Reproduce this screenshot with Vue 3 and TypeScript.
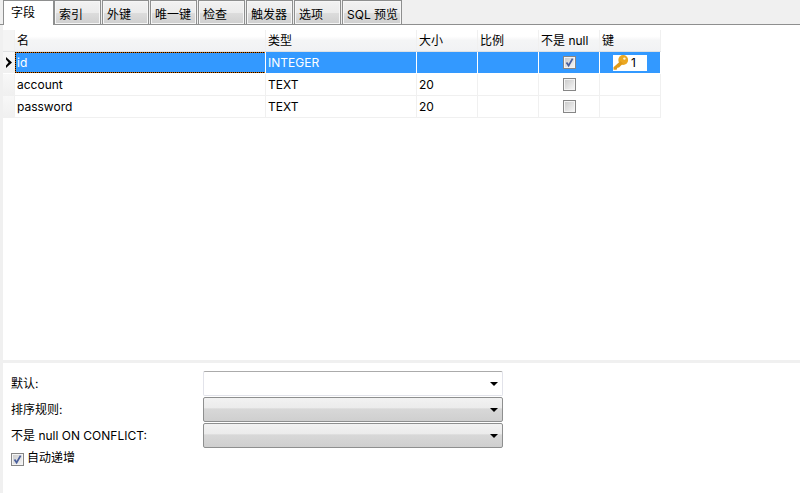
<script setup lang="ts">
interface Row { name: string; type: string; size: string; scale: string; notNull: boolean; key: boolean; selected: boolean }
const tabs: string[] = ['索引', '外键', '唯一键', '检查', '触发器', '选项', 'SQL 预览']
const headers: string[] = ['名', '类型', '大小', '比例', '不是 null', '键']
const rows: Row[] = [
  { name: 'id', type: 'INTEGER', size: '', scale: '', notNull: true, key: true, selected: true },
  { name: 'account', type: 'TEXT', size: '20', scale: '', notNull: false, key: false, selected: false },
  { name: 'password', type: 'TEXT', size: '20', scale: '', notNull: false, key: false, selected: false },
]
const fields: { label: string; plain: boolean }[] = [
  { label: '默认:', plain: true },
  { label: '排序规则:', plain: false },
  { label: '不是 null ON CONFLICT:', plain: false },
]
</script>

<template>
  <div class="app">
    <div class="tabbar">
      <div class="tab active">字段</div>
      <div v-for="t in tabs" :key="t" class="tab" :class="{ wide: t === 'SQL 预览' }">{{ t }}</div>
    </div>
    <div class="main">
      <div class="grid">
        <div class="row head">
          <div class="ind"></div>
          <div v-for="h in headers" :key="h" class="cell">{{ h }}</div>
        </div>
        <div v-for="r in rows" :key="r.name" class="row" :class="{ sel: r.selected }">
          <div class="ind">
            <svg v-if="r.selected" width="8" height="11" viewBox="0 0 8 11" class="arrow">
              <path d="M1 0 L7 5.5 L1 11 L1 8.5 L3.6 5.5 L1 2.5 Z" fill="#000" />
            </svg>
          </div>
          <div class="cell" :class="{ focus: r.selected }">{{ r.name }}</div>
          <div class="cell">{{ r.type }}</div>
          <div class="cell">{{ r.size }}</div>
          <div class="cell">{{ r.scale }}</div>
          <div class="cell center">
            <span class="check">
              <svg v-if="r.notNull" width="11" height="11" viewBox="0 0 11 11">
                <path d="M2.5 5.5 L4.6 8.6 L8.6 1.6" fill="none" stroke="#4a5f9c" stroke-width="1.8" />
              </svg>
            </span>
          </div>
          <div class="cell keycell">
            <span v-if="r.key" class="keybadge">
              <svg width="16" height="15" viewBox="0 0 16 15">
                <circle cx="10.2" cy="5" r="4.9" fill="#eba823" />
                <circle cx="11.4" cy="3.6" r="1.2" fill="#fff3cf" />
                <path d="M7.5 6 L0.5 12.2 L0.5 14.8 L3.6 14.8 L4.4 12.8 L6 12.4 L10 8.6 Z" fill="#e09a18" />
              </svg>
              <span>1</span>
            </span>
          </div>
        </div>
      </div>
    </div>
    <div class="form">
      <div v-for="f in fields" :key="f.label" class="field">
        <label class="label">{{ f.label }}</label>
        <div class="select" :class="{ plain: f.plain }"><span class="caret"></span></div>
      </div>
      <div class="auto">
        <span class="check small">
          <svg width="11" height="11" viewBox="0 0 11 11">
            <path d="M2.5 5.5 L4.6 8.6 L8.6 1.6" fill="none" stroke="#4a5f9c" stroke-width="1.8" />
          </svg>
        </span>
        <span>自动递增</span>
      </div>
    </div>
  </div>
</template>

<style>
html, body { margin: 0; background: #fff; }
</style>

<style scoped>
.app {
  width: 800px;
  height: 493px;
  background: #f0f0f0;
  display: flex;
  flex-direction: column;
  overflow: hidden;
  font-family: Inter, "Noto Sans CJK SC", sans-serif;
  font-size: 12px;
  color: #000;
}
.tabbar {
  height: 25px;
  box-sizing: border-box;
  display: flex;
  padding-left: 3px;
  gap: 1px;
  border-bottom: 1px solid #8e8f8f;
  flex: none;
}
.tab {
  width: 47px;
  height: 24px;
  box-sizing: border-box;
  border: 1px solid #8e8f8f;
  border-bottom: none;
  background: linear-gradient(#f2f2f2 0, #ebebeb 50%, #dddddd 51%, #cfcfcf 100%);
  box-shadow: inset 0 0 0 1px #f6f6f6;
  padding-left: 4px;
  padding-top: 4px;
  line-height: 20px;
  white-space: nowrap;
}
.tab.wide { width: 60px; }
.tab.active {
  width: 51px;
  height: 25px;
  background: #fff;
  box-shadow: none;
  border-color: #8e8f8f;
  padding-left: 7px;
  padding-top: 2px;
  margin-right: -1px;
  position: relative;
  z-index: 1;
}
.main {
  height: 335px;
  flex: none;
  margin-left: 3px;
  background: #fff;
  padding-top: 5px;
  box-sizing: border-box;
}
.grid { display: flex; flex-direction: column; width: 658px; }
.row {
  display: grid;
  grid-template-columns: 12px 251px 151px 61px 61px 61px 61px;
  height: 22px;
  box-sizing: border-box;
  border-bottom: 1px solid #f0f0f0;
}
.ind {
  background: linear-gradient(#f8f8f8, #f0f0f0);
  border-right: 1px solid #f0f0f0;
  display: flex;
  align-items: center;
}
.arrow { margin-left: 2px; }
.cell {
  border-right: 1px solid #f0f0f0;
  padding-left: 2px;
  line-height: 21px;
  white-space: nowrap;
  overflow: hidden;
  box-sizing: border-box;
}
.head {
  background: linear-gradient(#fff 0, #fff 30%, #f4f5f6 50%, #f1f2f4 100%);
  border-bottom: 1px solid #dfe1e3;
}
.head .cell { line-height: 22px; }
.head .ind { background: #f4f4f4; }
.sel .cell {
  background: #3399ff;
  color: #fff;
  border-right-color: #fff;
}
.sel { border-bottom-color: #fff; }
.sel .cell.focus {
  background:
    repeating-linear-gradient(90deg, #000 0 1px, #cc6600 1px 2px) top left / 100% 1px no-repeat,
    repeating-linear-gradient(90deg, #000 0 1px, #cc6600 1px 2px) bottom left / 100% 1px no-repeat,
    repeating-linear-gradient(0deg, #000 0 1px, #cc6600 1px 2px) top left / 1px 100% no-repeat,
    repeating-linear-gradient(0deg, #000 0 1px, #cc6600 1px 2px) top right / 1px 100% no-repeat,
    #3399ff;
  background-origin: border-box;
}
.center { display: flex; align-items: center; justify-content: center; padding-left: 0; }
.check {
  width: 13px;
  height: 13px;
  box-sizing: border-box;
  border: 1px solid #868686;
  background: linear-gradient(135deg, #c8c8c8, #f8f8f8);
  box-shadow: inset 0 0 0 1px #f4f4f4;
  display: inline-flex;
  align-items: center;
  justify-content: center;
  flex: none;
}
.keycell { display: flex; align-items: center; padding-left: 13px; }
.keybadge {
  width: 34px;
  height: 16px;
  background: #fff;
  color: #000;
  display: inline-flex;
  align-items: center;
  gap: 2px;
  line-height: 16px;
}
.form {
  flex: 1;
  margin-top: 3px;
  margin-left: 3px;
  background: #fff;
  padding: 8px 0 0 8px;
  box-sizing: border-box;
}
.field {
  display: grid;
  grid-template-columns: 192px 300px;
  height: 26px;
  align-items: center;
}
.label { padding-bottom: 4px; }
.select {
  align-self: start;
  width: 300px;
  height: 25px;
  box-sizing: border-box;
  border: 1px solid #8e8f8f;
  border-radius: 2px;
  background: linear-gradient(#f2f2f2 0, #ebebeb 45%, #d8d8d8 46%, #cfcfcf 100%);
  display: flex;
  align-items: center;
  justify-content: flex-end;
  padding-right: 4px;
}
.select.plain {
  background: #fff;
  border-color: #e2e3ea;
  border-top-color: #ababab;
}
.caret {
  width: 0;
  height: 0;
  border-left: 4px solid transparent;
  border-right: 4px solid transparent;
  border-top: 4px solid #000;
}
.auto {
  display: flex;
  align-items: center;
  gap: 3px;
  height: 20px;
  line-height: 18px;
}
.auto span:last-child { padding-bottom: 2px; }
</style>
